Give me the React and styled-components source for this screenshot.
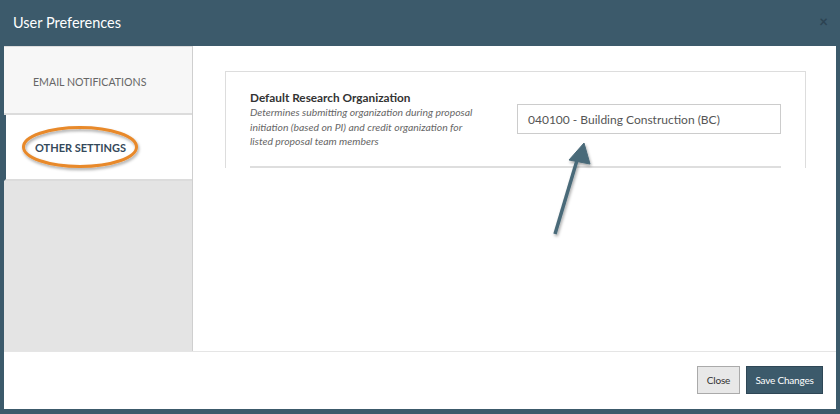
import styled, { createGlobalStyle } from 'styled-components';

const GlobalStyle = createGlobalStyle`
  html, body {
    margin: 0;
    padding: 0;
    background: #3c5a6b;
  }
  * { box-sizing: border-box; }
`;

const Frame = styled.div`
  position: relative;
  width: 840px;
  height: 414px;
  display: flex;
  flex-direction: column;
  background: #3c5a6b;
  font-family: Lato, "Open Sans", sans-serif;
  overflow: hidden;
`;

const Header = styled.div`
  height: 46px;
  flex: none;
  display: flex;
  align-items: center;
  justify-content: space-between;
  padding: 0 12px 0 13px;
  color: #fff;
`;

const Title = styled.h1`
  margin: 0;
  font-size: 14.5px;
  font-weight: 400;
  padding-bottom: 1px;
`;

const CloseX = styled.span`
  color: #2c4352;
  font-size: 15px;
  font-weight: 700;
  padding-bottom: 5px;
`;

const Body = styled.div`
  flex: none;
  height: 305px;
  margin: 0 4px;
  display: flex;
  background: #fff;
`;

const Sidebar = styled.div`
  width: 189px;
  flex: none;
  display: flex;
  flex-direction: column;
  background: #e4e4e4;
  border-right: 1px solid #cfcfcf;
`;

const Tab = styled.div`
  height: ${p => (p.$active ? 66 : 69)}px;
  display: flex;
  align-items: center;
  padding-left: 29px;
  padding-top: ${p => (p.$active ? 0 : 3)}px;
  background: ${p => (p.$active ? '#fff' : '#f7f7f7')};
  border-top: ${p => (p.$active ? 'none' : '1px solid #ddd')};
  border-bottom: 2px solid #dcdcdc;
  border-left: ${p => (p.$active ? '2px solid #3c5a6b' : 'none')};
  font-size: ${p => (p.$active ? 11 : 10.6)}px;
  text-transform: uppercase;
  color: ${p => (p.$active ? '#34495a' : '#666')};
  font-weight: ${p => (p.$active ? 700 : 400)};
`;

const Main = styled.div`
  flex: 1;
  padding: 25px 30px 0 32px;
`;

const Card = styled.div`
  border: 1px solid #ddd;
  border-bottom: none;
`;

const Row = styled.div`
  margin: 0 24px;
  padding: 18px 0 17px;
  display: flex;
  align-items: center;
  justify-content: space-between;
  border-bottom: 2px solid #dedede;
`;

const Label = styled.div`
  width: 232px;
`;

const LabelTitle = styled.div`
  font-size: 11.8px;
  font-weight: 700;
  color: #333;
  line-height: 15px;
`;

const LabelHelp = styled.div`
  font-size: 10.4px;
  font-style: italic;
  color: #666;
  line-height: 14.5px;
`;

const Input = styled.div`
  width: 264px;
  height: 30px;
  border: 1px solid #ccc;
  display: flex;
  align-items: center;
  padding-left: 10px;
  font-size: 12px;
  color: #555;
`;

const Footer = styled.div`
  flex: none;
  height: 58px;
  margin: 0 4px;
  display: flex;
  align-items: center;
  justify-content: flex-end;
  gap: 6px;
  padding: 0 13px 2px 0;
  background: #fff;
  border-top: 1px solid #e5e5e5;
`;

const Button = styled.button`
  width: ${p => (p.$primary ? 77 : 43)}px;
  height: 28px;
  padding: 0;
  font-family: inherit;
  font-size: 10px;
  letter-spacing: -0.2px;
  border: 1px solid ${p => (p.$primary ? '#2e4756' : '#aaa')};
  background: ${p => (p.$primary ? '#3c5a6b' : '#e8e8e8')};
  color: ${p => (p.$primary ? '#fff' : '#333')};
  cursor: pointer;
`;

const Annotation = styled.svg`
  position: absolute;
  left: 0;
  top: 0;
  pointer-events: none;
`;

export default function App() {
  return (
    <>
      <GlobalStyle />
      <Frame>
        <Header>
          <Title>User Preferences</Title>
          <CloseX>×</CloseX>
        </Header>
        <Body>
          <Sidebar>
            <Tab>Email Notifications</Tab>
            <Tab $active>Other Settings</Tab>
          </Sidebar>
          <Main>
            <Card>
              <Row>
                <Label>
                  <LabelTitle>Default Research Organization</LabelTitle>
                  <LabelHelp>
                    Determines submitting organization during proposal initiation (based on PI) and credit organization for listed proposal team members
                  </LabelHelp>
                </Label>
                <Input>040100 - Building Construction (BC)</Input>
              </Row>
            </Card>
          </Main>
        </Body>
        <Footer>
          <Button>Close</Button>
          <Button $primary>Save Changes</Button>
        </Footer>
        <Annotation width="840" height="414" viewBox="0 0 840 414">
          <defs>
            <filter id="sh" x="-50%" y="-50%" width="200%" height="200%">
              <feDropShadow dx="1" dy="2" stdDeviation="1.5" floodColor="#000" floodOpacity="0.35" />
            </filter>
          </defs>
          <ellipse cx="80" cy="147" rx="56.5" ry="19.5" fill="none" stroke="#e8892a" strokeWidth="3" filter="url(#sh)" />
          <g filter="url(#sh)" fill="#4a6a79" stroke="#4a6a79">
            <line x1="555" y1="234" x2="578" y2="157" strokeWidth="3.5" />
            <polygon points="584,143 590,164 569,160" strokeWidth="1" />
          </g>
        </Annotation>
      </Frame>
    </>
  );
}
